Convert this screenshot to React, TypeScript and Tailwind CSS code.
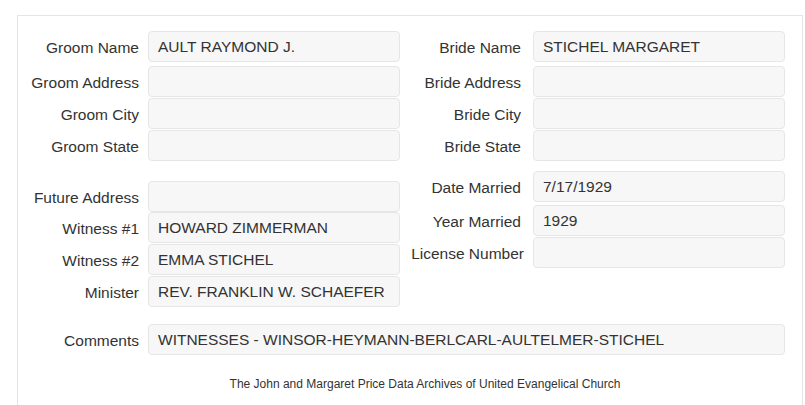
import React from 'react';

type FieldProps = {
  label: string;
  value?: string;
  gap: 'left' | 'right';
  className?: string;
  labelClass?: string;
};

function Field({ label, value = '', gap, className = '', labelClass = '' }: FieldProps) {
  return (
    <div className={`flex items-center h-[31px] ${className}`}>
      <div className={`w-[121px] shrink-0 text-right whitespace-nowrap pt-[3px] ${labelClass}`}>{label}</div>
      <div
        className={`${gap === 'left' ? 'ml-[9px]' : 'ml-[12px]'} w-[252px] h-full shrink-0 flex items-center pl-[9px] bg-[#f7f7f7] border border-[#e6e6e6] rounded-[4px] whitespace-nowrap overflow-hidden`}
      >
        {value}
      </div>
    </div>
  );
}

export default function App() {
  return (
    <div className="w-[805px] h-[405px] overflow-hidden bg-white text-[#333] text-[15.5px] font-['Liberation_Sans',Arial,sans-serif]">
      <div className="ml-[17px] mt-[15px] w-[786px] border border-[#e5e5e5] pt-[15px] pb-[20px]">
        <div className="flex">
          <div className="w-[382px] flex flex-col">
            <Field gap="left" label="Groom Name" value="AULT RAYMOND J." />
            <Field gap="left" label="Groom Address" className="mt-[4px]" />
            <Field gap="left" label="Groom City" className="mt-[1px]" />
            <Field gap="left" label="Groom State" className="mt-[1px]" />
            <Field gap="left" label="Future Address" className="mt-[20px]" />
            <Field gap="left" label="Witness #1" value="HOWARD ZIMMERMAN" />
            <Field gap="left" label="Witness #2" value="EMMA STICHEL" className="mt-[1px]" />
            <Field gap="left" label="Minister" value="REV. FRANKLIN W. SCHAEFER" className="mt-[1px]" />
          </div>
          <div className="w-[385px] flex flex-col">
            <Field gap="right" label="Bride Name" value="STICHEL MARGARET" />
            <Field gap="right" label="Bride Address" className="mt-[4px]" />
            <Field gap="right" label="Bride City" className="mt-[1px]" />
            <Field gap="right" label="Bride State" className="mt-[1px]" />
            <Field gap="right" label="Date Married" value="7/17/1929" className="mt-[10px]" />
            <Field gap="right" label="Year Married" value="1929" className="mt-[3px]" />
            <Field gap="right" label="License Number" className="mt-[1px]" labelClass="relative left-[3px]" />
          </div>
        </div>

        <div className="mt-[17px] flex items-center h-[31px]">
          <div className="w-[121px] shrink-0 text-right pt-[3px]">Comments</div>
          <div className="ml-[9px] w-[637px] h-full flex items-center pl-[9px] bg-[#f7f7f7] border border-[#e6e6e6] rounded-[4px] whitespace-nowrap">
            WITNESSES - WINSOR-HEYMANN-BERLCARL-AULTELMER-STICHEL
          </div>
        </div>

        <div className="mt-[21px] pl-[30px] flex justify-center text-[12px] leading-[17px]">
          The John and Margaret Price Data Archives of United Evangelical Church
        </div>
      </div>
    </div>
  );
}
